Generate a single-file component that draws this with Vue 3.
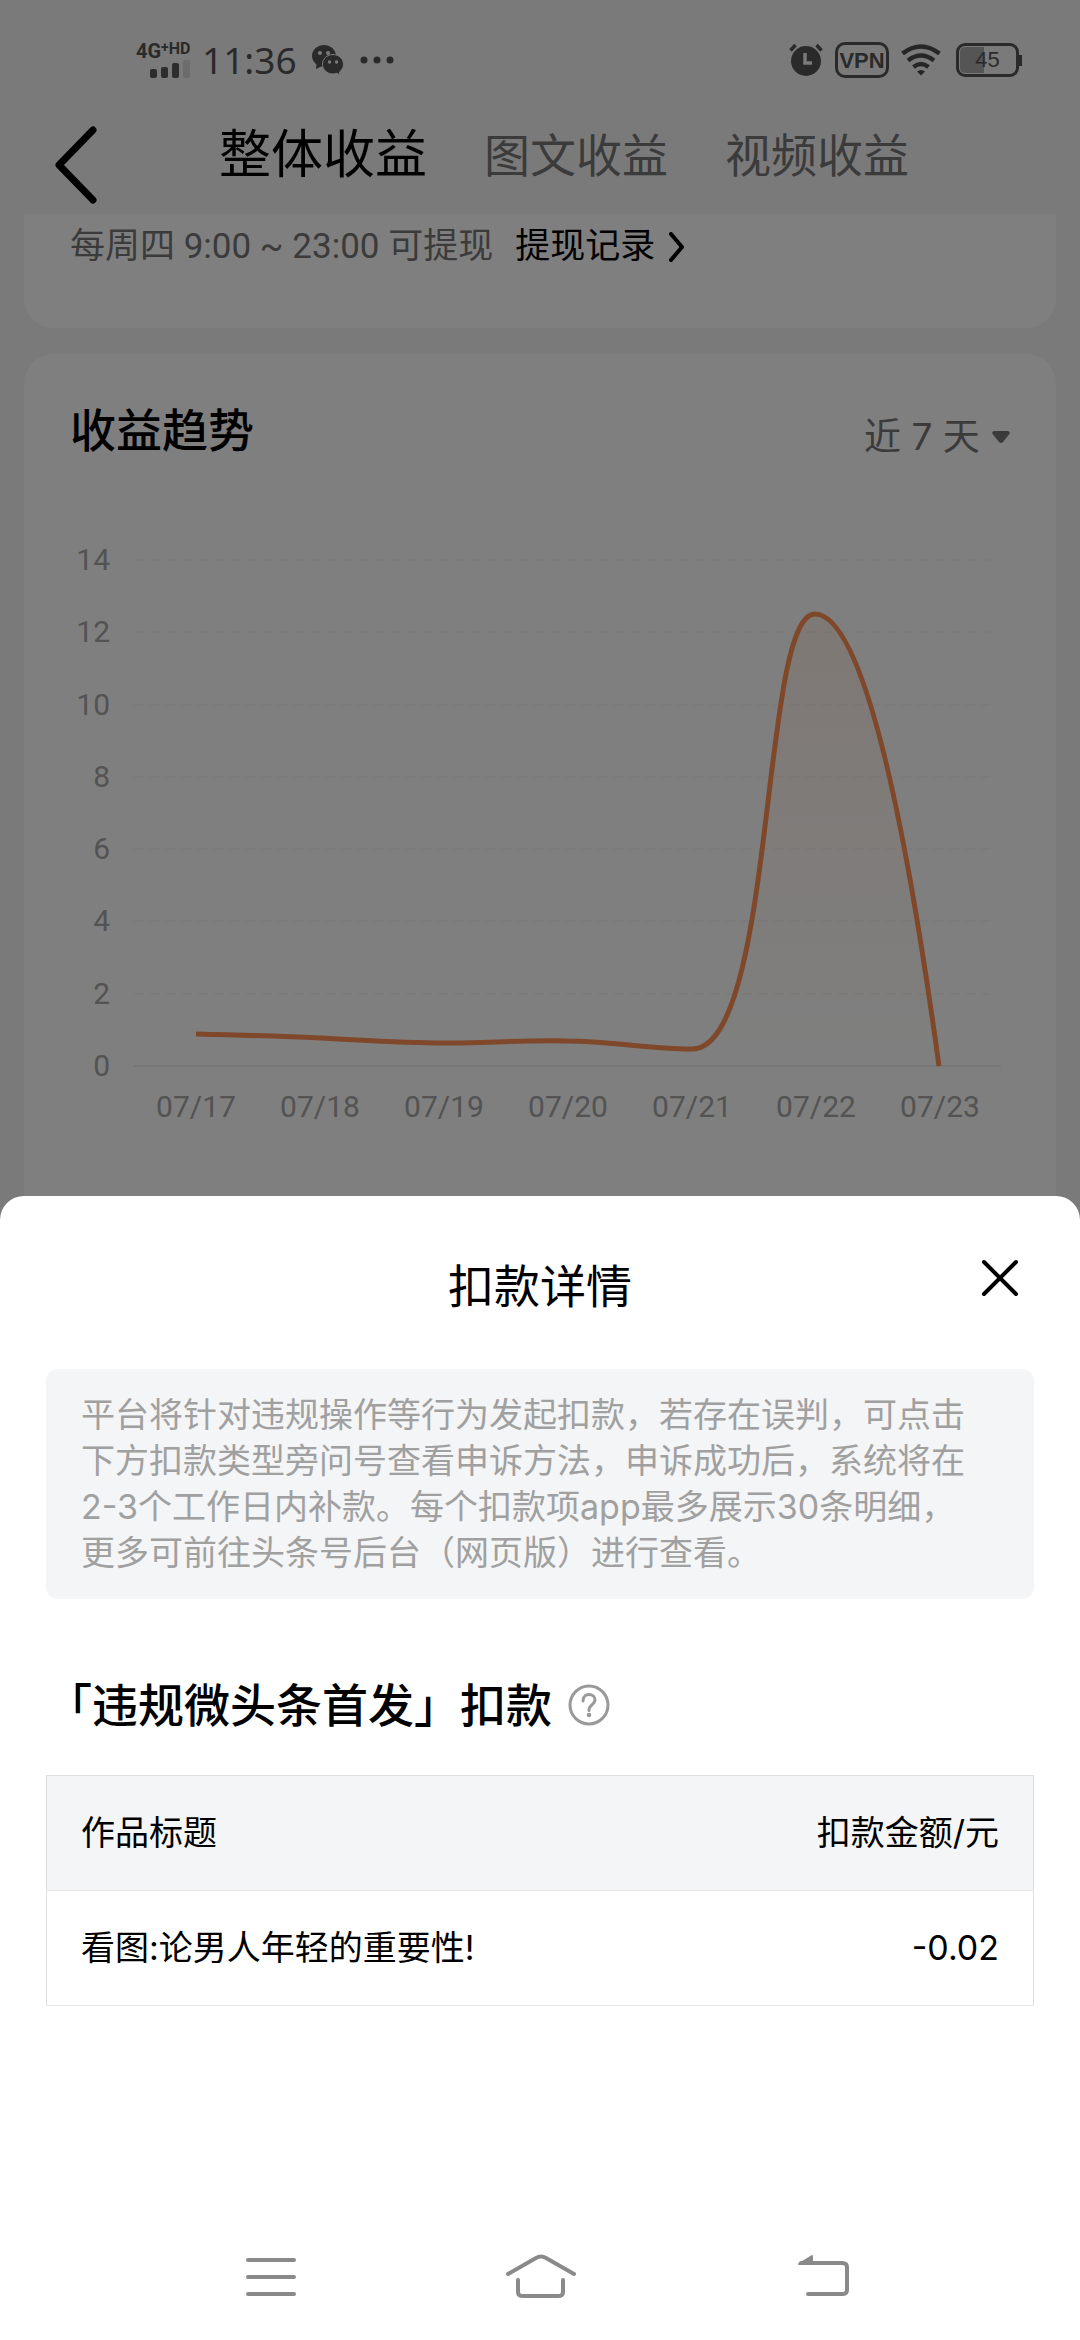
<script setup>
import { ref } from 'vue'

const tabs = ['整体收益', '图文收益', '视频收益']
const activeTab = ref(0)
const range = ref('近 7 天')
const sheetOpen = ref(true)

const noticeLines = [
  '平台将针对违规操作等行为发起扣款，若存在误判，可点击',
  '下方扣款类型旁问号查看申诉方法，申诉成功后，系统将在',
  '2-3个工作日内补款。每个扣款项app最多展示30条明细，',
  '更多可前往头条号后台（网页版）进行查看。',
]
const rows = [{ title: '看图:论男人年轻的重要性!', amount: '-0.02' }]

const yTicks = [14, 12, 10, 8, 6, 4, 2, 0].map((v, i) => ({ v, y: 20 + Math.round((i * 506) / 7) }))
const xTicks = ['07/17', '07/18', '07/19', '07/20', '07/21', '07/22', '07/23'].map((d, i) => ({ d, x: 172 + i * 124 }))
const line =
  'M172 494 C213 495 254 496 296 498 C338 500 378 503 420 503 C461 503 502 500 543 501 C584 501 626 509 667 509 C752 512 736 74 791 74 C848 74 893 365 915 526'
const area = line + ' L915 526 L172 526 Z'
</script>

<template>
  <div class="app">
    <div class="page">
      <header class="status">
        <div class="status-left">
          <div class="cell">
            <div class="net"><span class="g4">4G</span><span class="plus">+</span><span class="hd">HD</span></div>
            <svg class="bars" width="40" height="18" viewBox="0 0 40 18" fill="#5a5a5a">
              <rect x="0" y="9" width="7" height="9" rx="2" />
              <rect x="11" y="7" width="7" height="11" rx="2" />
              <rect x="22" y="3" width="7" height="15" rx="2" />
              <rect x="33" y="0" width="7" height="18" rx="2" fill="#d8d8d8" />
            </svg>
          </div>
          <span class="time">11:36</span>
          <svg class="wechat" width="32" height="32" viewBox="0 0 32 32">
            <path fill="#555" d="M12 1C5 1 0 6 0 12c0 4 2 6 4.500 8.500L4 25l5-2.500c1 .4 2 .5 3 .5 6 0 12-5 12-11S19 1 12 1z" />
            <circle cx="8" cy="9" r="2" fill="#f4f5f6" /><circle cx="16" cy="9" r="2" fill="#f4f5f6" />
            <path fill="#555" stroke="#f4f5f6" d="M21 10.500c-6 0-10.500 4.500-10.500 9.800S15 30 21 30c1.500 0 2.700-.2 4-.7l3 2-.5-3.300c2.500-2 4-4.500 4-7.700 0-5.300-4.500-9.800-10.500-9.800z" />
            <circle cx="17.500" cy="18" r="1.700" fill="#f4f5f6" /><circle cx="24.500" cy="18" r="1.700" fill="#f4f5f6" />
          </svg>
          <svg width="34" height="8" viewBox="0 0 34 8" fill="#555">
            <circle cx="4" cy="4" r="3.500" /><circle cx="17" cy="4" r="3.500" /><circle cx="30" cy="4" r="3.500" />
          </svg>
        </div>
        <div class="status-right">
          <svg width="34" height="34" viewBox="0 0 34 34">
            <circle cx="17" cy="18" r="15" fill="#555" />
            <path d="M1.500 7.500l5-5.500M32.500 7.500l-5-5.500" stroke="#555" stroke-width="3.500" fill="none" />
            <path d="M16 10v10h7" stroke="#f4f5f6" stroke-width="3.500" fill="none" />
          </svg>
          <span class="vpn">VPN</span>
          <svg class="wifi" width="40" height="32" viewBox="0 0 40 32" fill="none" stroke="#4c4c4c" stroke-width="4.500">
            <path d="M1.500 9.500Q20-4.500 38.500 9.500" />
            <path d="M7 16.500Q20 6.500 33 16.500" />
            <path d="M12.500 23Q20 17 27.500 23" />
            <path d="M16 27.500Q20 24.500 24 27.500L20 31.500z" fill="#4c4c4c" stroke="none" />
          </svg>
          <span class="battery"><span class="level"></span><span class="pct">45</span></span>
        </div>
      </header>

      <nav class="tabs">
        <button class="back" aria-label="返回">
          <svg width="42" height="78" viewBox="0 0 42 78" fill="none" stroke="#000" stroke-width="7" stroke-linecap="round" stroke-linejoin="round">
            <path d="M38 4L4 39l34 35" />
          </svg>
        </button>
        <button v-for="(t, i) in tabs" :key="t" class="tab" :class="{ on: i === activeTab }" @click="activeTab = i">{{ t }}</button>
      </nav>

      <section class="card withdraw">
        <span>每周四 9:00 ~ 23:00 可提现</span>
        <a href="#">提现记录
          <svg width="16" height="30" viewBox="0 0 16 30" fill="none" stroke="#000" stroke-width="4" stroke-linecap="round" stroke-linejoin="round">
            <path d="M2 2l11 13L2 28" />
          </svg>
        </a>
      </section>

      <section class="card trend">
        <div class="trend-head">
          <h2>收益趋势</h2>
          <label class="range">
            <select v-model="range" aria-label="时间范围">
              <option>近 7 天</option>
            </select>
            <svg width="18" height="12" viewBox="0 0 18 12" fill="#777"><path d="M2 0h14q3 1 1 3.500l-6 7.500q-2 2-4 0L1 3.500Q-1 1 2 0z" /></svg>
          </label>
        </div>
        <svg class="chart" viewBox="0 0 1032 600">
          <defs>
            <linearGradient id="fade" x1="0" y1="0" x2="0" y2="1">
              <stop offset="0" stop-color="#ff7a33" stop-opacity=".1" />
              <stop offset="1" stop-color="#ff7a33" stop-opacity="0" />
            </linearGradient>
          </defs>
          <g v-for="t in yTicks" :key="t.v">
            <line v-if="t.v" x1="110" x2="966" :y1="t.y" :y2="t.y" stroke="#f6f6f6" stroke-width="2" stroke-dasharray="10 6" />
            <line v-else x1="110" x2="977" :y1="t.y" :y2="t.y" stroke="#f0f0f0" stroke-width="2" />
            <text x="86" :y="t.y + 10" text-anchor="end">{{ t.v }}</text>
          </g>
          <path :d="area" fill="url(#fade)" />
          <path :d="line" fill="none" stroke="#ff9054" stroke-width="5" />
          <text v-for="t in xTicks" :key="t.d" :x="t.x" y="577" text-anchor="middle">{{ t.d }}</text>
        </svg>
      </section>
    </div>

    <div class="mask"></div>

    <div class="bottom">
      <section v-if="sheetOpen" class="sheet" role="dialog" aria-labelledby="sheet-title">
        <div class="sheet-head">
          <h1 id="sheet-title">扣款详情</h1>
          <button class="close" aria-label="关闭" @click="sheetOpen = false">
            <svg width="38" height="38" viewBox="0 0 38 38" stroke="#000" stroke-width="4" stroke-linecap="round">
              <path d="M3 3l32 32M35 3L3 35" />
            </svg>
          </button>
        </div>
        <p class="notice"><span v-for="l in noticeLines" :key="l">{{ l }}</span></p>
        <h3>
          「违规微头条首发」扣款
          <button class="help" aria-label="帮助">
            <svg width="42" height="42" viewBox="0 0 42 42" fill="none" stroke="#999" stroke-width="3">
              <circle cx="21" cy="21" r="19" />
              <path d="M15 17c0-4 2.500-6.500 6-6.500s6 2.500 6 5.500c0 4.500-6 5-6 9.500v1" stroke-linecap="round" />
              <circle cx="21" cy="31" r="2.300" fill="#999" stroke="none" />
            </svg>
          </button>
        </h3>
        <table>
          <thead>
            <tr><th scope="col">作品标题</th><th scope="col">扣款金额/元</th></tr>
          </thead>
          <tbody>
            <tr v-for="r in rows" :key="r.title"><td>{{ r.title }}</td><td>{{ r.amount }}</td></tr>
          </tbody>
        </table>
      </section>
      <nav class="system">
        <button aria-label="最近任务">
          <svg width="80" height="60" viewBox="0 0 80 60" fill="none" stroke="#8a8a8a" stroke-width="4" stroke-linecap="round">
            <path d="M18 13h46M18 30h46M18 47h46" />
          </svg>
        </button>
        <button aria-label="主屏幕">
          <svg width="80" height="60" viewBox="0 0 80 60" fill="none" stroke="#8a8a8a" stroke-width="4" stroke-linecap="round">
            <path d="M8 27L36 11q5-3 10 0l28 16M18 33v12q0 4 5 4h35q5 0 5-4V33" />
          </svg>
        </button>
        <button aria-label="返回上一级">
          <svg width="80" height="60" viewBox="0 0 80 60" fill="none" stroke="#8a8a8a" stroke-width="4" stroke-linecap="round">
            <path d="M31 16h41q5 0 5 4v23q0 4-5 4H38" />
            <path d="M29 17l13-8v8z" fill="#8a8a8a" stroke-width="2" stroke-linejoin="round" />
          </svg>
        </button>
      </nav>
    </div>
  </div>
</template>

<style>
body {
  margin: 0;
}
</style>

<style scoped>
.app {
  position: relative;
  min-height: 100vh;
  display: flex;
  flex-direction: column;
  background: #f4f5f6;
  color: #000;
  font-family: Inter, 'Noto Sans CJK SC', sans-serif;
  font-size: 34px;
  line-height: 46px;
  overflow: hidden;
}
button {
  display: block;
  padding: 0;
  border: 0;
  background: none;
  font: inherit;
  color: inherit;
}
svg {
  display: block;
  flex: none;
}
h1,
h2,
h3,
p {
  margin: 0;
}
.page {
  flex: 1;
  display: flex;
  flex-direction: column;
}
.status {
  display: flex;
  justify-content: space-between;
  align-items: center;
  padding: 36px 58px 0 136px;
  height: 48px;
  color: #555;
  font-family: Roboto, sans-serif;
}
.status-left,
.status-right {
  display: flex;
  align-items: center;
}
.status-left {
  gap: 16px;
}
.status-right {
  gap: 12px;
}
.cell {
  width: 56px;
}
.net {
  display: flex;
  height: 18px;
  line-height: 18px;
  font-weight: 700;
}
.g4 {
  font-size: 20px;
}
.plus {
  font-size: 14px;
  line-height: 10px;
}
.hd {
  font-size: 16px;
  line-height: 14px;
}
.bars {
  margin-left: 14px;
}
.time {
  font-family: 'Noto Sans', sans-serif;
  font-size: 37px;
  width: 94px;
  margin-left: -6px;
  color: #555;
}
.vpn {
  box-sizing: border-box;
  width: 54px;
  height: 36px;
  border: 3px solid #555;
  border-radius: 10px;
  font: 700 22px/31px 'Liberation Sans', sans-serif;
  text-align: center;
}
.battery {
  position: relative;
  box-sizing: border-box;
  width: 63px;
  height: 34px;
  margin: 0 3px;
  border: 3px solid #555;
  border-radius: 9px;
}
.battery::after {
  content: '';
  position: absolute;
  right: -6px;
  top: 9px;
  width: 3px;
  height: 11px;
  background: #555;
}
.level {
  position: absolute;
  left: 1px;
  top: 1px;
  bottom: 1px;
  width: 24px;
  border-radius: 5px 0 0 5px;
  background: #aaa;
}
.pct {
  position: relative;
  display: block;
  font: 22px/28px 'Liberation Sans', sans-serif;
  text-align: center;
}
.tabs {
  box-sizing: border-box;
  display: flex;
  align-items: center;
  height: 130px;
  padding-top: 12px;
}
.back {
  margin: 20px 122px 0 55px;
}
.tab {
  margin-right: 57px;
  font-size: 46px;
  line-height: 60px;
  color: #777;
}
.tab.on {
  font-size: 52px;
  color: #000;
}
.card {
  margin: 0 24px 26px;
  background: #fff;
  border-radius: 30px;
}
.withdraw {
  display: flex;
  gap: 22px;
  height: 90px;
  padding: 10px 46px 14px;
  border-radius: 0 0 30px 30px;
  color: #777;
  font-family: Roboto, 'Noto Sans CJK SC', sans-serif;
  font-size: 35px;
}
.withdraw a {
  display: flex;
  align-items: center;
  gap: 14px;
  height: 46px;
  color: #000;
  text-decoration: none;
}
.trend {
  flex: 1;
}
.trend-head {
  display: flex;
  justify-content: space-between;
  align-items: flex-start;
  padding: 46px 46px 80px;
}
.trend-head h2 {
  font-size: 46px;
  line-height: 60px;
  font-weight: 500;
}
.range {
  display: flex;
  align-items: center;
  gap: 12px;
  padding-top: 14px;
  color: #777;
}
.range select {
  appearance: none;
  margin: 0;
  padding: 0;
  border: 0;
  background: none;
  font: inherit;
  font-size: 37px;
  line-height: 46px;
  color: inherit;
}
.chart {
  width: 100%;
}
.chart text {
  font-family: Roboto, sans-serif;
  font-size: 30px;
  fill: #a6a6a6;
}
.mask {
  position: absolute;
  inset: 0;
  background: rgba(0, 0, 0, 0.5);
}
.bottom {
  position: absolute;
  left: 0;
  right: 0;
  bottom: 0;
}
.sheet {
  padding: 60px 46px 211px;
  background: #fff;
  border-radius: 24px 24px 0 0;
}
.sheet-head {
  position: relative;
  text-align: center;
}
h1 {
  font-size: 46px;
  line-height: 60px;
  font-weight: 400;
}
.close {
  position: absolute;
  right: 15px;
  top: 3px;
}
.notice {
  margin-top: 53px;
  padding: 23px 35px;
  border-radius: 12px;
  background: #f4f5f6;
  color: #a0a0a0;
}
.notice span {
  display: block;
  white-space: nowrap;
}
h3 {
  display: flex;
  align-items: center;
  gap: 16px;
  margin: 76px 0 40px;
  font-size: 46px;
  line-height: 60px;
  font-weight: 500;
}
table {
  width: 100%;
  border-collapse: collapse;
  border: 1px solid #dedede;
}
th,
td {
  height: 114px;
  padding: 0 34px;
  font-weight: 400;
  text-align: left;
  border-bottom: 1px solid #e6e6e6;
}
th {
  background: #f4f5f6;
}
th:last-child,
td:last-child {
  text-align: right;
}
.system {
  display: flex;
  justify-content: center;
  height: 123px;
  background: #fff;
}
.system button {
  display: flex;
  justify-content: center;
  width: 25%;
  padding-top: 30px;
}
</style>
